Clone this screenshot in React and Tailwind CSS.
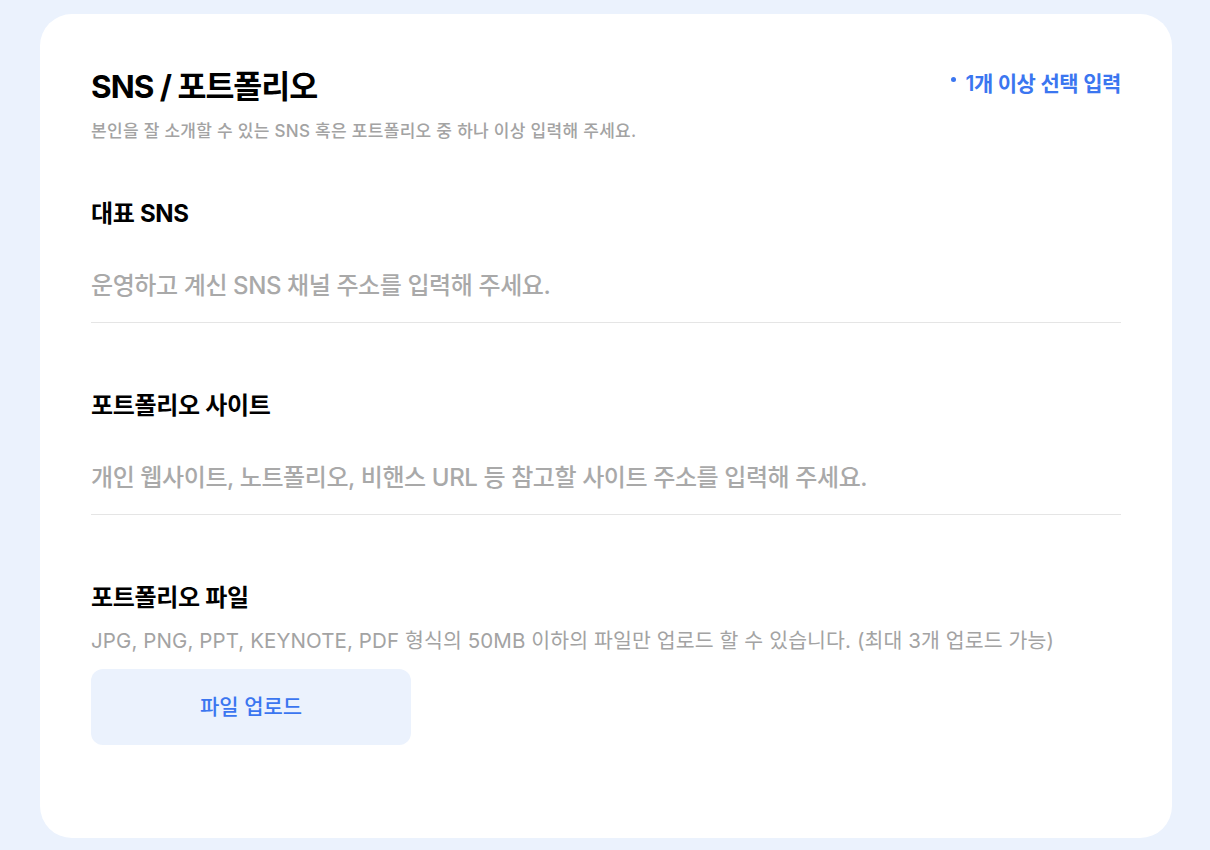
import { useState } from "react";

const FONT = "font-['Inter','Noto_Sans_CJK_KR',sans-serif]";

/* ================= FIELD ================= */
const Field = ({ label, placeholder, value, onChange, className = "" }) => (
  <div className={className}>
    <h3 className="text-[24px] leading-[30px] font-bold text-black tracking-[-0.3px]">
      {label}
    </h3>
    <div className="mt-[41px] pb-[20px] border-b border-[#e5e5e5]">
      <input
        value={value}
        onChange={(e) => onChange(e.target.value)}
        placeholder={placeholder}
        className="w-full h-[32px] text-[24px] leading-[32px] text-black outline-none bg-transparent placeholder:text-[#a9a9a9] font-medium tracking-[-0.4px]"
      />
    </div>
  </div>
);

export default function App() {
  const [sns, setSns] = useState("");
  const [site, setSite] = useState("");

  return (
    <div className={`min-h-[850px] bg-[#ebf2fd] pt-[14px] pl-[40px] pr-[38px] pb-[12px] ${FONT}`}>
      <div className="bg-white rounded-[32px] pt-[53px] px-[51px] pb-[93px]">
        {/* HEADER */}
        <div className="flex items-start justify-between">
          <h2 className="text-[31.5px] leading-[40px] font-bold text-black tracking-[-1px]">
            SNS / 포트폴리오
          </h2>
          <p className="flex items-center gap-[9px] text-[21px] leading-[30px] font-semibold text-[#3b76f0] mt-[2px] tracking-[-0.4px]">
            <span className="w-[5px] h-[5px] rounded-full bg-[#3b76f0] -mt-[9px]" />
            1개 이상 선택 입력
          </p>
        </div>
        <p className="mt-[12px] text-[17px] leading-[24px] text-[#a3a3a3] font-medium tracking-[0.3px]">
          본인을 잘 소개할 수 있는 SNS 혹은 포트폴리오 중 하나 이상 입력해 주세요.
        </p>

        <Field
          className="mt-[56px]"
          label="대표 SNS"
          placeholder="운영하고 계신 SNS 채널 주소를 입력해 주세요."
          value={sns}
          onChange={setSns}
        />
        <Field
          className="mt-[68px]"
          label="포트폴리오 사이트"
          placeholder="개인 웹사이트, 노트폴리오, 비핸스 URL 등 참고할 사이트 주소를 입력해 주세요."
          value={site}
          onChange={setSite}
        />

        {/* FILE */}
        <div className="mt-[68px]">
          <h3 className="text-[24px] leading-[30px] font-bold text-black tracking-[-0.3px]">
            포트폴리오 파일
          </h3>
          <p className="mt-[14px] text-[20.5px] leading-[28px] text-[#a3a3a3] tracking-[0.1px]">
            JPG, PNG, PPT, KEYNOTE, PDF 형식의 50MB 이하의 파일만 업로드 할 수 있습니다. (최대 3개 업로드 가능)
          </p>
          <button className="mt-[14px] w-[320px] h-[76px] rounded-[12px] bg-[#ebf2fd] text-[#3b76f0] text-[21px] font-medium">
            파일 업로드
          </button>
        </div>
      </div>
    </div>
  );
}
